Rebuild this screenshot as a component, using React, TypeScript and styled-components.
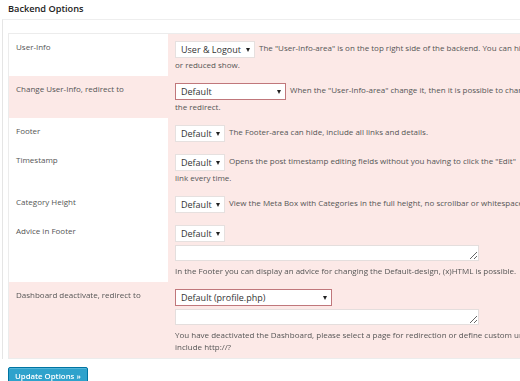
import React from 'react';
import styled, { createGlobalStyle } from 'styled-components';

const Global = createGlobalStyle`
  html, body { margin: 0; padding: 0; background: #ffffff; overflow: hidden; }
  body { font-family: "Open Sans", "Noto Sans", sans-serif; color: #555; }
`;

const Page = styled.div`
  width: 640px;
`;

const Title = styled.h3`
  margin: 0;
  height: 19px;
  padding-left: 8px;
  font-size: 9.2px;
  font-weight: 600;
  line-height: 17px;
  color: #222;
`;

const Box = styled.div`
  margin-left: 2px;
  border-left: 1px solid #e5e5e5;
  border-top: 1px solid #eeeeee;
  padding: 13px 0 0 5px;
`;

const Table = styled.div`
  border: 1px solid #ececec;
  border-right: none;
`;

const Row = styled.div<{ $alert?: boolean }>`
  display: grid;
  grid-template-columns: 159px 1fr;
  background: ${(p) => (p.$alert ? '#fce9e7' : '#ffffff')};
`;

const Label = styled.div`
  padding: 8px 8px 5px 7px;
  font-size: 8px;
  line-height: 10px;
  color: #555;
`;

const Control = styled.div`
  padding: 7px 0 5px 7px;
  background: #fce9e7;
  font-size: 8px;
  line-height: 13px;
  color: #555;
  white-space: nowrap;
`;

const Select = styled.span<{ $w: number; $error?: boolean }>`
  display: inline-flex;
  align-items: center;
  justify-content: space-between;
  vertical-align: top;
  box-sizing: border-box;
  width: ${(p) => p.$w}px;
  height: 17px;
  margin-right: 4px;
  padding: 0 4px 0 5px;
  background: #ffffff;
  border: 1px solid ${(p) => (p.$error ? '#c0777b' : '#e6e0df')};
  font-size: 9px;
  line-height: 15px;
  color: #333;
`;

const Arrow = styled.span`
  width: 0;
  height: 0;
  border-left: 2px solid transparent;
  border-right: 2px solid transparent;
  border-top: 4px solid #222;
`;

const TextArea = styled.textarea`
  display: block;
  box-sizing: border-box;
  width: 304px;
  height: 16px;
  margin: 3px 0 0 0;
  padding: 0;
  border: 1px solid #e4dedd;
  background: #ffffff;
  resize: vertical;
  outline: none;
`;

const Note = styled.div`
  margin-top: 4px;
  line-height: 12px;
`;

const Button = styled.button`
  display: block;
  margin: 8px 0 0 8px;
  height: 18px;
  padding: 0 6px 1px;
  background: #2ea2cc;
  border: 1px solid #0074a2;
  border-radius: 2px;
  box-shadow: inset 0 1px 0 rgba(120, 200, 230, 0.5);
  font-family: "Open Sans", "Noto Sans", sans-serif;
  font-size: 7.8px;
  font-weight: 600;
  color: #ffffff;
`;

const Sel = ({ w, value, error }: { w: number; value: string; error?: boolean }) => (
  <Select $w={w} $error={error}>
    <span>{value}</span>
    <Arrow />
  </Select>
);

export default function App() {
  return (
    <Page>
      <Global />
      <Title>Backend Options</Title>
      <Box>
        <Table>
          <Row>
            <Label>User-Info</Label>
            <Control>
              <Sel w={80} value="User & Logout" />
              The "User-Info-area" is on the top right side of the backend. You can hide
              <br />
              or reduced show.
            </Control>
          </Row>
          <Row $alert>
            <Label>Change User-Info, redirect to</Label>
            <Control>
              <Sel w={111} value="Default" error />
              When the "User-Info-area" change it, then it is possible to change
              <br />
              the redirect.
            </Control>
          </Row>
          <Row>
            <Label>Footer</Label>
            <Control>
              <Sel w={50} value="Default" />
              The Footer-area can hide, include all links and details.
            </Control>
          </Row>
          <Row>
            <Label>Timestamp</Label>
            <Control>
              <Sel w={50} value="Default" />
              Opens the post timestamp editing fields without you having to click the "Edit"
              <br />
              link every time.
            </Control>
          </Row>
          <Row>
            <Label>Category Height</Label>
            <Control>
              <Sel w={50} value="Default" />
              View the Meta Box with Categories in the full height, no scrollbar or whitespace.
            </Control>
          </Row>
          <Row>
            <Label>Advice in Footer</Label>
            <Control>
              <Sel w={50} value="Default" />
              <TextArea />
              <Note>In the Footer you can display an advice for changing the Default-design, (x)HTML is possible.</Note>
            </Control>
          </Row>
          <Row $alert>
            <Label>Dashboard deactivate, redirect to</Label>
            <Control>
              <Sel w={157} value="Default (profile.php)" error />
              <TextArea />
              <Note>
                You have deactivated the Dashboard, please select a page for redirection or define custom url,
                <br />
                include http://?
              </Note>
            </Control>
          </Row>
        </Table>
      </Box>
      <Button>Update Options »</Button>
    </Page>
  );
}
